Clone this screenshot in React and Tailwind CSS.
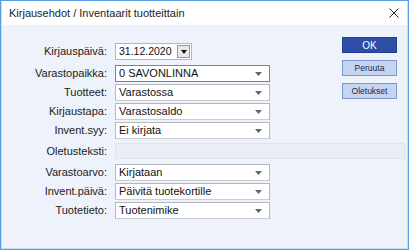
import React from "react";

const font = { fontFamily: '"Liberation Sans", Arial, sans-serif' };

function Arrow() {
  return (
    <svg width="7" height="4" viewBox="0 0 7 4" className="shrink-0">
      <path d="M0 0 H7 L3.5 4 Z" fill="#666" />
    </svg>
  );
}

function Row({ label, children }) {
  return (
    <div className="flex items-center h-[17px]">
      <div className="w-[106px] text-right text-[11px] text-[#222] pr-[1px]">{label}</div>
      <div className="ml-[7px]">{children}</div>
    </div>
  );
}

function Select({ value, focused }) {
  return (
    <div
      className={`w-[155px] h-[17px] bg-white flex items-center pl-[3px] pr-[7px] text-[11px] text-[#111] border ${
        focused ? "border-[#5b86d6]" : "border-[#b4b8c0] border-b-[#c9ccd2]"
      }`}
    >
      <span className="flex-1 leading-none">{value}</span>
      <Arrow />
    </div>
  );
}

function Button({ children, primary }) {
  return (
    <div
      className={`w-[55px] h-[16px] flex items-center justify-center text-[8.5px] border ${
        primary
          ? "bg-[#2d4ea6] border-[#223f8f] text-white text-[10px]"
          : "bg-[#c6d3f1] border-[#7f97cf] text-[#1a2a4a]"
      }`}
    >
      {children}
    </div>
  );
}

export default function App() {
  return (
    <div className="w-[409px] h-[250px] bg-[#5a9fe4] p-[1px]" style={font}>
      <div className="w-full h-full flex flex-col border-l border-r border-b border-[#c6ddf5]">
        <div className="h-[24px] bg-white flex items-center pl-[7px] pr-[8px] shrink-0">
          <span className="flex-1 text-[11px] text-[#1b1b1b]">
            Kirjausehdot / Inventaarit tuotteittain
          </span>
          <svg width="10" height="10" viewBox="0 0 10 10">
            <path d="M0.5 0.5 L9.5 9.5 M9.5 0.5 L0.5 9.5" stroke="#222" strokeWidth="1" />
          </svg>
        </div>
        <div className="flex-1 bg-[#eef2fa] pt-[12px]">
          <div className="flex pr-[10px]">
            <div className="flex flex-col gap-[2px] pt-[6px]">
              <Row label="Kirjauspäivä:">
                <div className="w-[77px] h-[17px] bg-white border border-[#b4b8c0] flex items-center pl-[3px] pr-[1px] text-[10.5px] text-[#111]">
                  <span className="flex-1 leading-none">31.12.2020</span>
                  <div className="w-[13px] h-[13px] bg-[#e8e8e8] border border-[#9a9a9a] flex items-center justify-center">
                    <svg width="6" height="4" viewBox="0 0 6 4">
                      <path d="M0 0 H6 L3 4 Z" fill="#111" />
                    </svg>
                  </div>
                </div>
              </Row>
              <div className="h-[1px]" />
              <Row label="Varastopaikka:">
                <Select value="0 SAVONLINNA" focused />
              </Row>
              <Row label="Tuotteet:">
                <Select value="Varastossa" />
              </Row>
              <Row label="Kirjaustapa:">
                <Select value="Varastosaldo" />
              </Row>
              <Row label="Invent.syy:">
                <Select value="Ei kirjata" />
              </Row>
            </div>
            <div className="ml-auto flex flex-col gap-[7px]">
              <Button primary>OK</Button>
              <Button>Peruuta</Button>
              <Button>Oletukset</Button>
            </div>
          </div>
          <div className="flex flex-col gap-[2px] mt-[4px]">
            <div className="flex items-center h-[16px]">
              <div className="w-[106px] shrink-0 text-right text-[11px] text-[#222] pr-[1px]">Oletusteksti:</div>
              <div className="ml-[7px] shrink-0 w-[290px] h-[16px] bg-[#e9edf5] border border-[#dfe4ec]" />
            </div>
            <div className="h-[1px]" />
            <Row label="Varastoarvo:">
              <Select value="Kirjataan" />
            </Row>
            <Row label="Invent.päivä:">
              <Select value="Päivitä tuotekortille" />
            </Row>
            <Row label="Tuotetieto:">
              <Select value="Tuotenimike" />
            </Row>
          </div>
        </div>
      </div>
    </div>
  );
}
